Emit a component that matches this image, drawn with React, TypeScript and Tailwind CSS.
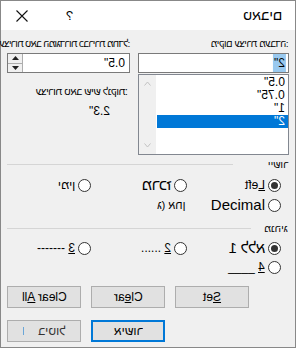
import type { ReactNode } from 'react'

const font = "font-['Liberation_Sans','DejaVu_Sans',sans-serif]"

// text that appears flipped in the dialog
function M({ children, rtl, className = '' }: { children: ReactNode; rtl?: boolean; className?: string }) {
  return (
    <span dir={rtl ? 'rtl' : 'ltr'} className={`inline-block -scale-x-100 whitespace-nowrap ${className}`}>
      {children}
    </span>
  )
}

function Radio({ checked }: { checked?: boolean }) {
  return (
    <span className="w-[13px] h-[13px] shrink-0 rounded-full border border-[#333] bg-white flex items-center justify-center">
      {checked && <span className="w-[7px] h-[7px] rounded-full bg-[#333]" />}
    </span>
  )
}

function Option({ children, checked, width }: { children?: ReactNode; checked?: boolean; width: string }) {
  return (
    <div className={`${width} shrink-0 flex items-center justify-end gap-[3px]`}>
      {children}
      <Radio checked={checked} />
    </div>
  )
}

function Header({ label, line }: { label: string; line: string }) {
  return (
    <div className="flex items-center h-[14px]">
      <div className={`${line} h-px bg-[#d5d5d5]`} />
      <div className="flex-1 flex justify-end pr-[1px]">
        <M rtl className="text-[10px]">{label}</M>
      </div>
    </div>
  )
}

function Btn({ children, ok }: { children: ReactNode; ok?: boolean }) {
  return (
    <div
      className={`w-[74px] h-[22px] flex items-center justify-center text-[12px] bg-[#e1e1e1] ${
        ok ? 'border-2 border-[#0078d7]' : 'border border-[#adadad]'
      }`}
    >
      {children}
    </div>
  )
}

export default function App() {
  return (
    <div className={`w-[296px] h-[348px] border border-[#888] bg-[#f0f0f0] flex flex-col text-black ${font}`}>
      <div className="h-[29px] bg-white flex items-center">
        <svg width="12" height="12" viewBox="0 0 12 12" className="ml-[15px]">
          <path d="M0.5 0.5 L11.5 11.5 M11.5 0.5 L0.5 11.5" stroke="#111" strokeWidth="1.1" />
        </svg>
        <M className="ml-[38px] text-[13px]">?</M>
        <div className="flex-1 flex justify-end pr-[13px]">
          <M rtl className="text-[14px]">טאבים</M>
        </div>
      </div>

      <div className="flex-1 flex flex-col px-[6px] pt-[6px]">
        <div className="flex justify-between">
          <div className="w-[123px] flex flex-col">
            <div className="h-[16px] flex justify-end">
              <M rtl className="text-[9.5px] tracking-[-0.6px] leading-[16px]">עצירות טאב המוגדרות כברירת מחדל:</M>
            </div>
            <div className="mt-[1px] h-[20px] bg-white border border-[#7a7a7a] flex">
              <div className="w-[15px] border-r border-[#adadad] bg-[#f0f0f0] flex flex-col">
                <div className="flex-1 flex items-center justify-center border-b border-[#adadad]">
                  <svg width="7" height="4" viewBox="0 0 7 4"><path d="M3.5 0 L7 4 L0 4Z" fill="#222" /></svg>
                </div>
                <div className="flex-1 flex items-center justify-center">
                  <svg width="7" height="4" viewBox="0 0 7 4"><path d="M0 0 L7 0 L3.5 4Z" fill="#222" /></svg>
                </div>
              </div>
              <div className="flex-1 flex items-center justify-end pr-[4px]">
                <M className="text-[12px]">0.5"</M>
              </div>
            </div>
            <div className="mt-[11px] flex justify-end pr-[2px]">
              <M rtl className="text-[10px] tracking-[-0.4px]">עצירות טאב שיש לנקות:</M>
            </div>
            <div className="mt-[3px] flex justify-end pr-[20px]">
              <M className="text-[12px]">2.3"</M>
            </div>
          </div>

          <div className="w-[151px] flex flex-col">
            <div className="h-[16px] flex justify-end pr-[1px]">
              <M rtl className="text-[9.5px] tracking-[-0.4px] leading-[16px]">מיקום עצירת מעבדה:</M>
            </div>
            <div className="mt-[1px] h-[20px] bg-white border border-[#7a7a7a] flex items-center justify-end pr-[2px]">
              <M className="text-[12px] bg-[#99c9ef] px-[1px]">2"</M>
            </div>
            <div className="mt-[1px] h-[81px] bg-white border border-[#828790] flex">
              <div className="w-[17px] bg-[#f0f0f0] flex flex-col items-center justify-between py-[6px]">
                <svg width="7" height="5" viewBox="0 0 7 5"><path d="M0.5 4.5 L3.5 1 L6.5 4.5" stroke="#c2c2c2" fill="none" /></svg>
                <svg width="7" height="5" viewBox="0 0 7 5"><path d="M0.5 0.5 L3.5 4 L6.5 0.5" stroke="#c2c2c2" fill="none" /></svg>
              </div>
              <div className="flex-1 flex flex-col pt-[1px] pl-[1px] text-[12px] leading-[13px]">
                <div className="flex justify-end pr-[3px]"><M>0.5"</M></div>
                <div className="flex justify-end pr-[3px]"><M>0.75"</M></div>
                <div className="flex justify-end pr-[3px]"><M>1"</M></div>
                <div className="flex justify-end pr-[3px] bg-[#0078d7] text-white"><M>2"</M></div>
              </div>
            </div>
          </div>
        </div>

        <div className="mt-[2px]">
          <Header label="יישור" line="w-[226px]" />
        </div>
        <div className="mt-[7px] flex flex-col gap-[6px] pr-[8px]">
          <div className="flex items-center h-[14px]">
            <Option width="w-[84px]">
              <M rtl className="text-[12px]">ימין</M>
            </Option>
            <Option width="w-[96px]">
              <M rtl className="text-[15px] tracking-[-0.3px]">מרכז</M>
            </Option>
            <Option width="w-[94px]" checked>
              <M className="text-[12px]"><u>L</u>eft</M>
            </Option>
          </div>
          <div className="flex items-center h-[14px]">
            <div className="w-[84px] shrink-0" />
            <div className="w-[96px] shrink-0 flex justify-end pr-[2px]">
              <M rtl className="text-[11px]">ג) אחן</M>
            </div>
            <Option width="w-[94px]">
              <span className="text-[15px] whitespace-nowrap">Decimal</span>
            </Option>
          </div>
        </div>

        <div className="mt-[9px]">
          <Header label="מנהיג" line="w-[244px]" />
        </div>
        <div className="mt-[6px] flex flex-col gap-[5px] pr-[8px]">
          <div className="flex items-center h-[14px]">
            <Option width="w-[84px]">
              <M className="text-[12px]"><u>3</u> -------</M>
            </Option>
            <Option width="w-[96px]">
              <M className="text-[12px]"><u>2</u> ......</M>
            </Option>
            <Option width="w-[94px]" checked>
              <M rtl className="text-[15px] tracking-[-0.3px]">1 ללא</M>
            </Option>
          </div>
          <div className="flex items-center h-[14px]">
            <div className="w-[180px] shrink-0" />
            <Option width="w-[94px]">
              <M className="text-[12px]"><u>4</u> ____</M>
            </Option>
          </div>
        </div>

        <div className="mt-[12px] flex gap-[10px]">
          <Btn><M>Clear <u>A</u>ll</M></Btn>
          <Btn><M>Cl<u>e</u>ar</M></Btn>
          <Btn><M><u>S</u>et</M></Btn>
        </div>
        <div className="mt-[12px] flex gap-[10px]">
          <Btn>
            <span className="w-px h-[8px] bg-[#6aa6d8] mr-[14px]" />
            <M rtl className="text-[#333]">ביטול</M>
          </Btn>
          <Btn ok><M rtl>אישור</M></Btn>
        </div>
      </div>
    </div>
  )
}
